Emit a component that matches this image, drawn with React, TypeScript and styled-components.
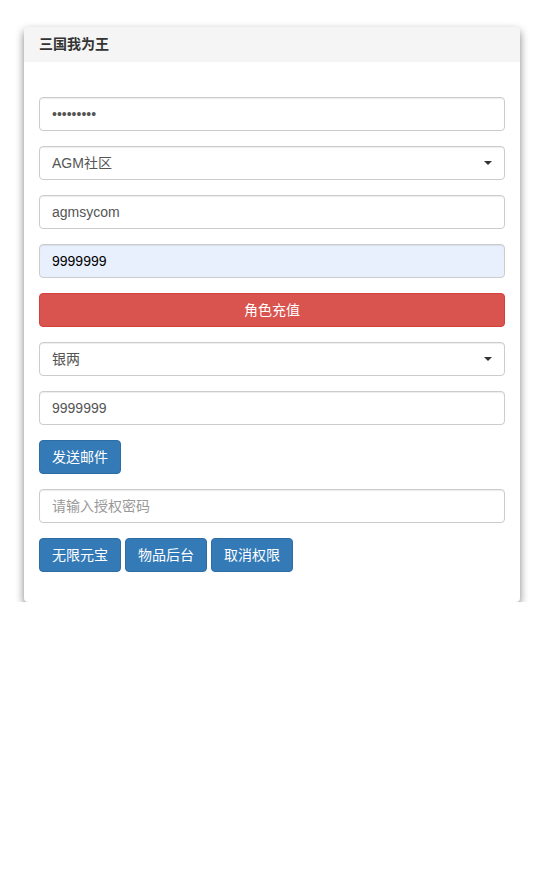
import styled, { createGlobalStyle } from "styled-components";

const GlobalStyle = createGlobalStyle`
  * { box-sizing: border-box; }
  body {
    margin: 0;
    background: #fff;
    font-family: "Liberation Sans", "Noto Sans CJK SC", Arial, sans-serif;
    font-size: 14px;
    color: #333;
  }
`;

const Panel = styled.div`
  width: 496px;
  margin: 27px 0 0 24px;
  background: #fff;
  border-radius: 4px;
  box-shadow: 0 4px 9px rgba(0, 0, 0, 0.5);
  overflow: hidden;
`;

const Heading = styled.div`
  background: #f5f5f5;
  padding: 10px 15px;
  font-size: 14px;
  font-weight: bold;
  line-height: 15px;
  color: #333;
`;

const Body = styled.div`
  padding: 35px 15px 15px;
`;

const Group = styled.div`
  margin-bottom: 15px;
`;

const Input = styled.input<{ $filled?: boolean }>`
  display: block;
  width: 100%;
  height: 34px;
  padding: 6px 12px;
  font-family: inherit;
  font-size: 14px;
  line-height: 20px;
  color: ${(p) => (p.$filled ? "#000" : "#555")};
  background: ${(p) => (p.$filled ? "#e8f0fe" : "#fff")};
  border: 1px solid #ccc;
  border-radius: 4px;
  box-shadow: inset 0 1px 1px rgba(0, 0, 0, 0.075);
  outline: none;
  &::placeholder {
    color: #999;
  }
`;

const SelectWrap = styled.div`
  position: relative;
  &::after {
    content: "";
    position: absolute;
    right: 13px;
    top: 15px;
    border-left: 4px solid transparent;
    border-right: 4px solid transparent;
    border-top: 4px solid #333;
    pointer-events: none;
  }
`;

const Select = styled.select`
  display: block;
  width: 100%;
  height: 34px;
  padding: 6px 12px;
  font-family: inherit;
  font-size: 14px;
  color: #555;
  background: #fff;
  border: 1px solid #ccc;
  border-radius: 4px;
  box-shadow: inset 0 1px 1px rgba(0, 0, 0, 0.075);
  appearance: none;
  outline: none;
`;

const Button = styled.button<{ $variant?: "danger" | "primary"; $block?: boolean }>`
  display: ${(p) => (p.$block ? "block" : "inline-block")};
  width: ${(p) => (p.$block ? "100%" : "auto")};
  height: 34px;
  padding: 6px 12px;
  font-family: inherit;
  font-size: 14px;
  line-height: 20px;
  color: #fff;
  background: ${(p) => (p.$variant === "danger" ? "#d9534f" : "#337ab7")};
  border: 1px solid ${(p) => (p.$variant === "danger" ? "#d43f3a" : "#2e6da4")};
  border-radius: 4px;
  cursor: pointer;
`;

const ButtonRow = styled.div`
  display: flex;
  gap: 4px;
`;

export default function App() {
  return (
    <>
      <GlobalStyle />
      <Panel>
        <Heading>三国我为王</Heading>
        <Body>
          <Group>
            <Input type="password" defaultValue="123456789" />
          </Group>
          <Group>
            <SelectWrap>
              <Select defaultValue="agm">
                <option value="agm">AGM社区</option>
              </Select>
            </SelectWrap>
          </Group>
          <Group>
            <Input defaultValue="agmsycom" />
          </Group>
          <Group>
            <Input $filled defaultValue="9999999" />
          </Group>
          <Group>
            <Button $variant="danger" $block>
              角色充值
            </Button>
          </Group>
          <Group>
            <SelectWrap>
              <Select defaultValue="yl">
                <option value="yl">银两</option>
              </Select>
            </SelectWrap>
          </Group>
          <Group>
            <Input defaultValue="9999999" />
          </Group>
          <Group>
            <Button>发送邮件</Button>
          </Group>
          <Group>
            <Input placeholder="请输入授权密码" />
          </Group>
          <Group>
            <ButtonRow>
              <Button>无限元宝</Button>
              <Button>物品后台</Button>
              <Button>取消权限</Button>
            </ButtonRow>
          </Group>
        </Body>
      </Panel>
    </>
  );
}
